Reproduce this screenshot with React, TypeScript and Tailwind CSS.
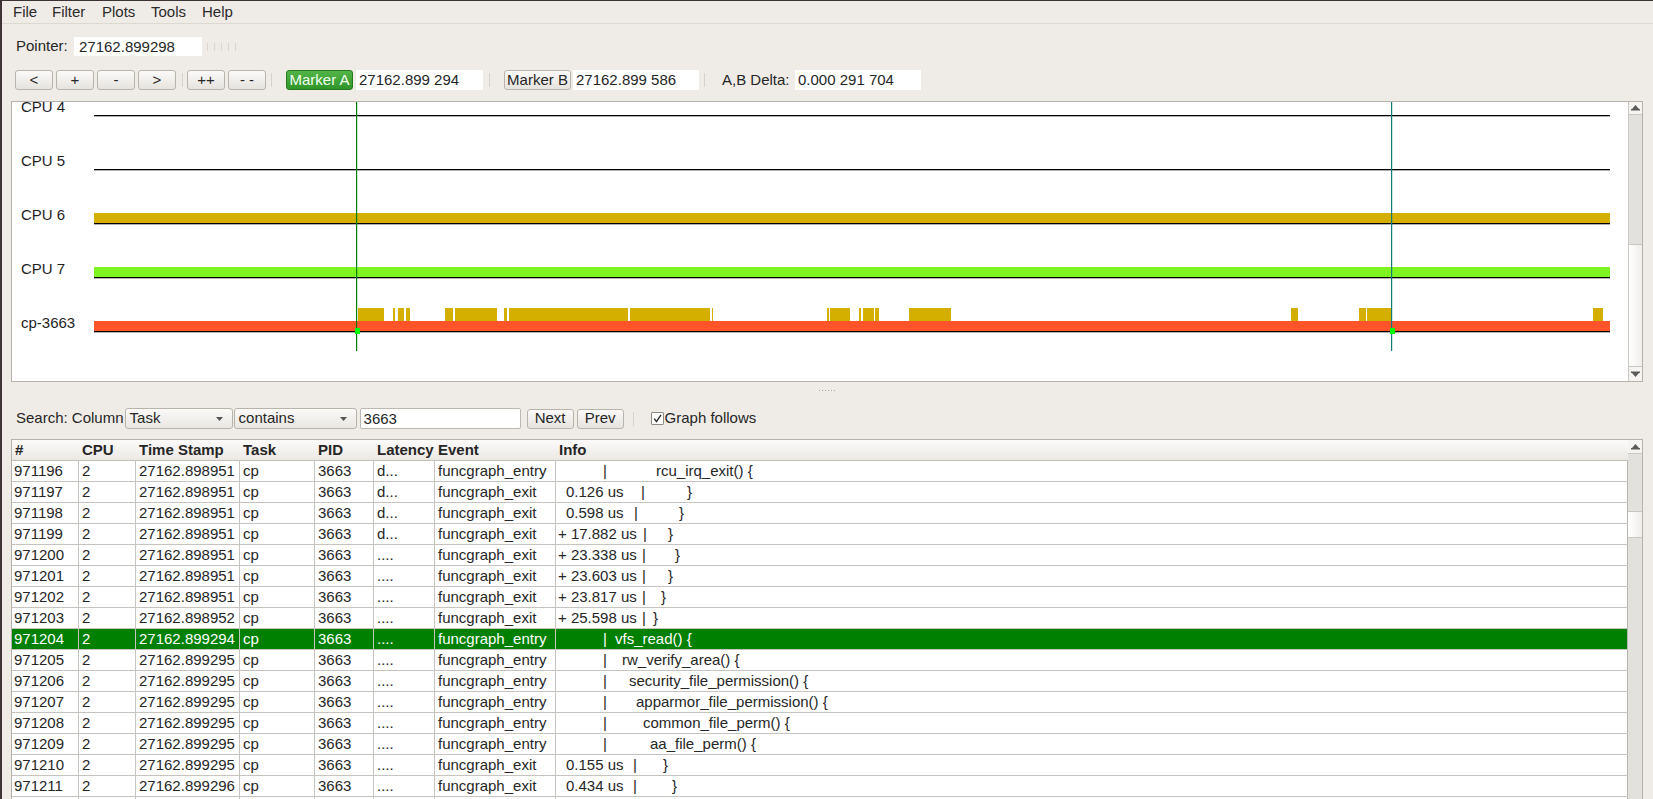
import React from 'react';

type Row = {
  id: string;
  ts: string;
  lat: string;
  ev: string;
  pre?: string;
  px?: number;
  bar: number;
  text: string;
  tx: number;
};

// x positions of the info pieces are page pixels, the Info cell starts at 556
const INFO_LEFT = 556;

const rows: Row[] = [
  { id: '971196', ts: '27162.898951', lat: 'd...', ev: 'funcgraph_entry', bar: 605, text: 'rcu_irq_exit() {', tx: 656 },
  { id: '971197', ts: '27162.898951', lat: 'd...', ev: 'funcgraph_exit', pre: '0.126 us', px: 566, bar: 643, text: '}', tx: 687 },
  { id: '971198', ts: '27162.898951', lat: 'd...', ev: 'funcgraph_exit', pre: '0.598 us', px: 566, bar: 636, text: '}', tx: 679 },
  { id: '971199', ts: '27162.898951', lat: 'd...', ev: 'funcgraph_exit', pre: '+ 17.882 us', px: 558, bar: 645, text: '}', tx: 668 },
  { id: '971200', ts: '27162.898951', lat: '....', ev: 'funcgraph_exit', pre: '+ 23.338 us', px: 558, bar: 644, text: '}', tx: 675 },
  { id: '971201', ts: '27162.898951', lat: '....', ev: 'funcgraph_exit', pre: '+ 23.603 us', px: 558, bar: 644, text: '}', tx: 668 },
  { id: '971202', ts: '27162.898951', lat: '....', ev: 'funcgraph_exit', pre: '+ 23.817 us', px: 558, bar: 644, text: '}', tx: 661 },
  { id: '971203', ts: '27162.898952', lat: '....', ev: 'funcgraph_exit', pre: '+ 25.598 us', px: 558, bar: 644, text: '}', tx: 653 },
  { id: '971204', ts: '27162.899294', lat: '....', ev: 'funcgraph_entry', bar: 605, text: 'vfs_read() {', tx: 615 },
  { id: '971205', ts: '27162.899295', lat: '....', ev: 'funcgraph_entry', bar: 605, text: 'rw_verify_area() {', tx: 622 },
  { id: '971206', ts: '27162.899295', lat: '....', ev: 'funcgraph_entry', bar: 605, text: 'security_file_permission() {', tx: 629 },
  { id: '971207', ts: '27162.899295', lat: '....', ev: 'funcgraph_entry', bar: 605, text: 'apparmor_file_permission() {', tx: 636 },
  { id: '971208', ts: '27162.899295', lat: '....', ev: 'funcgraph_entry', bar: 605, text: 'common_file_perm() {', tx: 643 },
  { id: '971209', ts: '27162.899295', lat: '....', ev: 'funcgraph_entry', bar: 605, text: 'aa_file_perm() {', tx: 650 },
  { id: '971210', ts: '27162.899295', lat: '....', ev: 'funcgraph_exit', pre: '0.155 us', px: 566, bar: 635, text: '}', tx: 663 },
  { id: '971211', ts: '27162.899296', lat: '....', ev: 'funcgraph_exit', pre: '0.434 us', px: 566, bar: 635, text: '}', tx: 672 },
];

// gold (running) slices on the cp-3663 task row, page x coordinates
const slices: [number, number][] = [
  [358, 384], [393, 395], [398, 404], [406, 410], [445, 453], [455, 497], [504, 507],
  [509, 628], [630, 710], [712, 713], [827, 829], [830, 850], [859, 861], [863, 874],
  [875, 879], [909, 951], [1291, 1298], [1359, 1366], [1367, 1391], [1593, 1603],
];

function Btn({ w, children, green = false }: { w: string; children: React.ReactNode; green?: boolean }) {
  return (
    <div
      className={
        green
          ? `${w} h-[20px] shrink-0 flex items-center justify-center rounded-[3px] border border-[#257a1f] bg-linear-to-b from-[#52b446] to-[#2f962a] text-[#f2fff0]`
          : `${w} h-[20px] shrink-0 flex items-center justify-center rounded-[3px] border border-[#b8b3ab] bg-linear-to-b from-[#fbfaf9] to-[#e6e3de] text-[#262626]`
      }
    >
      {children}
    </div>
  );
}

function Sep() {
  return <div className="w-px h-[14px] shrink-0 bg-[#d5d1cb]" />;
}

function Arrow({ down = false }: { down?: boolean }) {
  return (
    <svg width="9" height="6" viewBox="0 0 9 6" className={down ? 'rotate-180' : ''}>
      <polygon points="4.5,0 8,4 1,4" fill="#5c5b58" />
      <rect x="0" y="4" width="9" height="1.5" fill="#5c5b58" />
    </svg>
  );
}

function Combo({ w, label }: { w: string; label: string }) {
  return (
    <div className={`${w} h-[21px] shrink-0 flex items-center justify-between rounded-[3px] border border-[#b8b3ab] bg-linear-to-b from-[#fbfaf9] to-[#e9e6e2] pl-[4px] pr-[9px]`}>
      <span>{label}</span>
      <svg width="7" height="4" viewBox="0 0 7 4">
        <polygon points="0,0 7,0 3.5,4" fill="#555" />
      </svg>
    </div>
  );
}

function Graph() {
  const lines = [13, 67, 121, 175, 229];
  const labels = ['CPU 4', 'CPU 5', 'CPU 6', 'CPU 7', 'cp-3663'];
  return (
    <svg width="1616" height="279" className="block shrink-0">
      {labels.map((l, i) => (
        <text key={l} x="9" y={lines[i] - 2.6} fontSize="15" fill="#1e1e1e" fontFamily="'Liberation Sans', Arial, sans-serif">
          {l}
        </text>
      ))}
      <rect x="82" y="111" width="1516" height="10" fill="#d4af00" />
      <rect x="82" y="165" width="1516" height="10" fill="#7ef520" />
      <rect x="82" y="219" width="1516" height="10" fill="#ff5429" />
      {slices.map(([a, b]) => (
        <rect key={a} x={a - 12} y="206" width={b - a} height="13" fill="#d4af00" />
      ))}
      {lines.map((y) => (
        <rect key={y} x="82" y={y} width="1516" height="1.3" fill="#000" />
      ))}
      <rect x="344" y="0" width="1.2" height="249" fill="#008000" />
      <rect x="1379" y="0" width="1.2" height="249" fill="#0f7c7a" />
      <rect x="343" y="226" width="5" height="6" fill="#00ff00" />
      <rect x="1378" y="226" width="5" height="6" fill="#00ff00" />
    </svg>
  );
}

function InfoCell({ r }: { r: Row }) {
  return (
    <div className="flex whitespace-pre overflow-hidden">
      <span className="shrink-0" style={{ width: r.bar - 2 - INFO_LEFT, paddingLeft: r.px ? r.px - INFO_LEFT : 0 }}>
        {r.pre ?? ''}
      </span>
      <span className="shrink-0 w-[4px] text-center">|</span>
      <span style={{ paddingLeft: r.tx - r.bar - 2 }}>{r.text}</span>
    </div>
  );
}

export default function App() {
  return (
    <div className="h-[799px] w-[1653px] overflow-hidden border-l-[2px] border-t border-[#3b3336] bg-[#efece8] text-[15px] text-[#262626] font-['Liberation_Sans',Arial,sans-serif]">
      {/* menu bar */}
      <div className="h-[23px] flex items-center border-b border-[#dcd8d2] pl-[11px] text-[#2a2a2a]">
        <span className="w-[39px]">File</span>
        <span className="w-[50px]">Filter</span>
        <span className="w-[49px]">Plots</span>
        <span className="w-[51px]">Tools</span>
        <span>Help</span>
      </div>

      <div className="pl-[9px] pr-[10px]">
        {/* pointer */}
        <div className="mt-[13px] h-[19px] flex items-center pl-[5px]">
          <span className="w-[58px] shrink-0">Pointer:</span>
          <div className="w-[128px] h-[19px] bg-white pl-[5px] leading-[19px]">27162.899298</div>
          <div className="ml-[5px] flex gap-[6px]">
            <div className="w-px h-[8px] bg-[#d9d6d1]" />
            <div className="w-px h-[8px] bg-[#d9d6d1]" />
            <div className="w-px h-[8px] bg-[#d9d6d1]" />
            <div className="w-px h-[8px] bg-[#d9d6d1]" />
            <div className="w-px h-[8px] bg-[#d9d6d1]" />
          </div>
        </div>

        {/* zoom / marker buttons */}
        <div className="mt-[14px] h-[20px] flex items-center pl-[4px]">
          <div className="flex gap-[3px]">
            <Btn w="w-[38px]">&lt;</Btn>
            <Btn w="w-[38px]">+</Btn>
            <Btn w="w-[38px]">-</Btn>
            <Btn w="w-[38px]">&gt;</Btn>
          </div>
          <div className="ml-[6px] mr-[4px]"><Sep /></div>
          <div className="flex gap-[3px]">
            <Btn w="w-[38px]">++</Btn>
            <Btn w="w-[38px]">- -</Btn>
          </div>
          <div className="ml-[5px] mr-[14px]"><Sep /></div>
          <Btn w="w-[67px]" green>Marker A</Btn>
          <div className="ml-[3px] w-[127px] h-[20px] bg-white pl-[3px] leading-[20px]">27162.899 294</div>
          <div className="ml-[6px] mr-[14px]"><Sep /></div>
          <Btn w="w-[67px]">Marker B</Btn>
          <div className="ml-[2px] w-[126px] h-[20px] bg-white pl-[3px] leading-[20px]">27162.899 586</div>
          <div className="ml-[5px] mr-[17px]"><Sep /></div>
          <span className="w-[73px] shrink-0 whitespace-nowrap">A,B Delta:</span>
          <div className="w-[126px] h-[20px] bg-white pl-[3px] leading-[20px]">0.000 291 704</div>
        </div>

        {/* graph */}
        <div className="mt-[11px] h-[281px] flex border border-[#b6b1aa] bg-white">
          <Graph />
          <div className="w-[14px] flex flex-col border-l border-[#cbc7c1]">
            <div className="h-[13px] flex items-center justify-center bg-[#f5f4f2] border-b border-[#cbc7c1]">
              <Arrow />
            </div>
            <div className="h-[129px] bg-[#e3e1dd]" />
            <div className="h-[123px] bg-linear-to-r from-white to-[#f0eeeb] border-y border-[#c9c5bf]" />
            <div className="flex-1 flex items-center justify-center bg-[#f5f4f2]">
              <Arrow down />
            </div>
          </div>
        </div>

        {/* splitter */}
        <div className="h-[26px] flex justify-center pt-[8px]">
          <div className="flex gap-[2px] h-px">
            <div className="w-px h-px bg-[#aaa69f]" />
            <div className="w-px h-px bg-[#aaa69f]" />
            <div className="w-px h-px bg-[#aaa69f]" />
            <div className="w-px h-px bg-[#aaa69f]" />
            <div className="w-px h-px bg-[#aaa69f]" />
            <div className="w-px h-px bg-[#aaa69f]" />
          </div>
        </div>

        {/* search */}
        <div className="h-[21px] flex items-center pl-[5px]">
          <span className="shrink-0 whitespace-nowrap mr-[1px]">Search: Column</span>
          <Combo w="w-[108px]" label="Task" />
          <div className="ml-[1px]">
            <Combo w="w-[123px]" label="contains" />
          </div>
          <div className="ml-[3px] w-[161px] h-[21px] bg-white border border-[#bdb8b1] rounded-[2px] pl-[3px] leading-[19px]">3663</div>
          <div className="ml-[6px] flex gap-[3px]">
            <Btn w="w-[47px]">Next</Btn>
            <Btn w="w-[47px]">Prev</Btn>
          </div>
          <div className="ml-[9px] mr-[17px]"><Sep /></div>
          <div className="w-[13px] h-[13px] shrink-0 border border-[#8e8a84] bg-white rounded-[1px] flex items-center justify-center">
            <svg width="9" height="9" viewBox="0 0 9 9">
              <path d="M1.2 4.6 L3.5 7.6 L8 0.8" stroke="#2a2a2a" strokeWidth="1.4" fill="none" />
            </svg>
          </div>
          <span className="ml-[1px] whitespace-nowrap">Graph follows</span>
        </div>

        {/* table */}
        <div className="mt-[10px] flex border border-[#b6b1aa] bg-white">
          <div className="w-[1616px] shrink-0 flex flex-col">
            <div className="h-[21px] grid grid-cols-[67px_57px_104px_75px_59px_61px_121px_1fr] border-b border-[#c2beb8] bg-linear-to-b from-[#fcfbfa] to-[#ebe8e4] font-bold leading-[20px]">
              <div className="pl-[3px]">#</div>
              <div className="pl-[3px]">CPU</div>
              <div className="pl-[3px]">Time Stamp</div>
              <div className="pl-[3px]">Task</div>
              <div className="pl-[3px]">PID</div>
              <div className="pl-[3px]">Latency</div>
              <div className="pl-[3px]">Event</div>
              <div className="pl-[3px]">Info</div>
            </div>
            {rows.map((r) => {
              const sel = r.id === '971204';
              return (
                <div
                  key={r.id}
                  className={
                    sel
                      ? 'h-[21px] grid grid-cols-[67px_57px_104px_75px_59px_61px_121px_1fr] border-b border-[#c7c4c0] bg-[#008000] text-white leading-[20px]'
                      : 'h-[21px] grid grid-cols-[67px_57px_104px_75px_59px_61px_121px_1fr] border-b border-[#c7c4c0] leading-[20px]'
                  }
                >
                  <div className="pl-[2px] border-r border-[#c7c4c0]">{r.id}</div>
                  <div className="pl-[3px] border-r border-[#c7c4c0]">2</div>
                  <div className="pl-[3px] border-r border-[#c7c4c0]">{r.ts}</div>
                  <div className="pl-[3px] border-r border-[#c7c4c0]">cp</div>
                  <div className="pl-[3px] border-r border-[#c7c4c0]">3663</div>
                  <div className="pl-[3px] border-r border-[#c7c4c0]">{r.lat}</div>
                  <div className="pl-[3px] border-r border-[#c7c4c0]">{r.ev}</div>
                  <div className="border-r border-[#b9b5ae]">
                    <InfoCell r={r} />
                  </div>
                </div>
              );
            })}
            {/* next row, only its top edge is in view */}
            <div className="h-[21px] grid grid-cols-[67px_57px_104px_75px_59px_61px_121px_1fr]">
              <div className="border-r border-[#c7c4c0]" />
              <div className="border-r border-[#c7c4c0]" />
              <div className="border-r border-[#c7c4c0]" />
              <div className="border-r border-[#c7c4c0]" />
              <div className="border-r border-[#c7c4c0]" />
              <div className="border-r border-[#c7c4c0]" />
              <div className="border-r border-[#c7c4c0]" />
              <div className="border-r border-[#b9b5ae]" />
            </div>
          </div>
          <div className="w-[14px] flex flex-col">
            <div className="h-[14px] flex items-center justify-center bg-[#f5f4f2] border-b border-[#cbc7c1]">
              <Arrow />
            </div>
            <div className="h-[57px] bg-[#e3e1dd]" />
            <div className="h-[27px] bg-linear-to-r from-white to-[#f0eeeb] border-y border-[#c9c5bf]" />
            <div className="flex-1 bg-[#e3e1dd]" />
          </div>
        </div>
      </div>
    </div>
  );
}
